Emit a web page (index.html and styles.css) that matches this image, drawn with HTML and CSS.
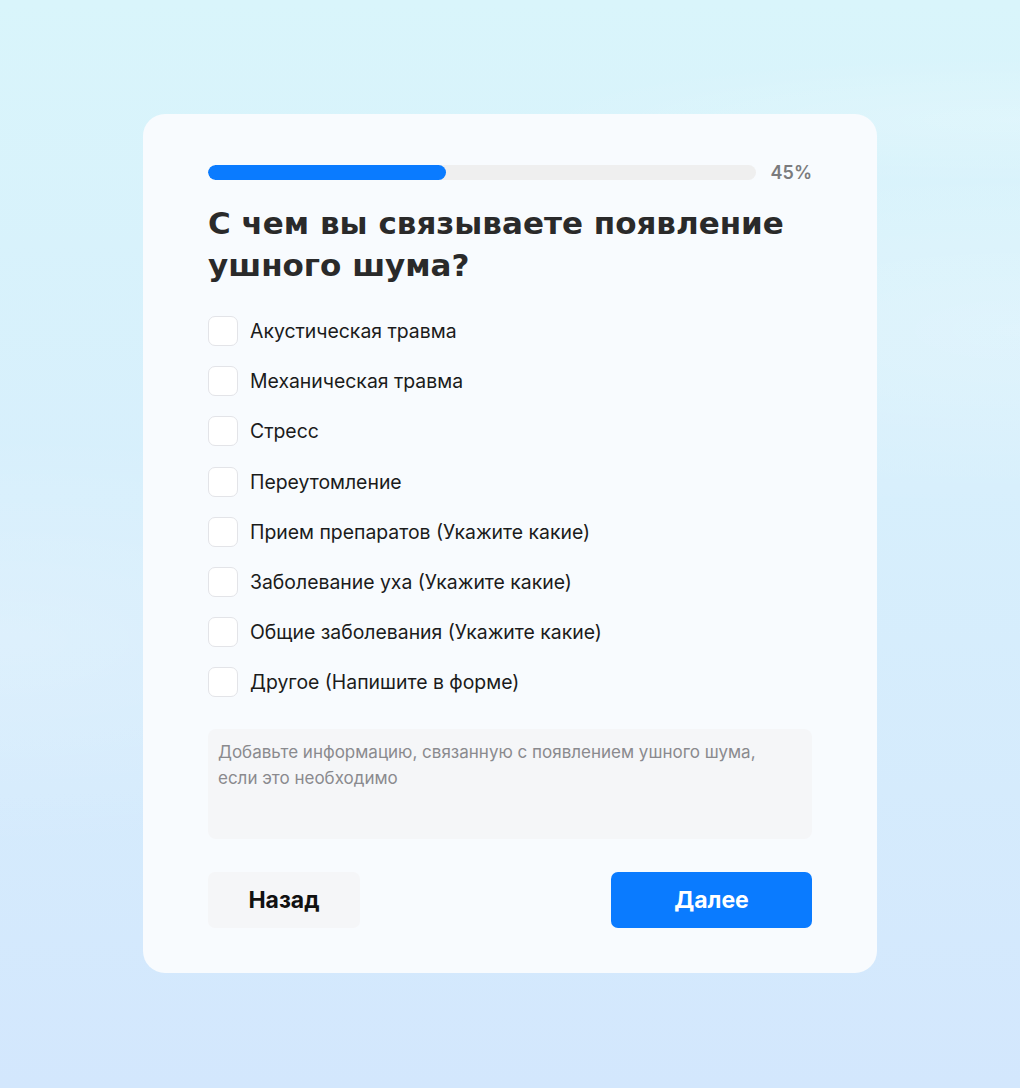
FILE: index.html
```html
<!DOCTYPE html>
<html lang="ru">
<head>
    <meta charset="UTF-8">
    <meta name="viewport" content="width=device-width, initial-scale=1.0">
    <title>Опрос — ушной шум</title>
    <link rel="stylesheet" href="styles.css">
</head>
<body>

<div class="page">
    <div class="quiz-card">
        <!-- Прогресс прохождения опроса -->
        <div class="progress">
            <div class="progress-track">
                <div class="progress-fill" style="width: 43.5%;"></div>
            </div>
            <span class="progress-value">45%</span>
        </div>

        <h2 class="question">С чем вы связываете появление ушного шума?</h2>

        <div class="options">
            <label class="option"><input type="checkbox"><span class="box"></span>Акустическая травма</label>
            <label class="option"><input type="checkbox"><span class="box"></span>Механическая травма</label>
            <label class="option"><input type="checkbox"><span class="box"></span>Стресс</label>
            <label class="option"><input type="checkbox"><span class="box"></span>Переутомление</label>
            <label class="option"><input type="checkbox"><span class="box"></span>Прием препаратов (Укажите какие)</label>
            <label class="option"><input type="checkbox"><span class="box"></span>Заболевание уха (Укажите какие)</label>
            <label class="option"><input type="checkbox"><span class="box"></span>Общие заболевания (Укажите какие)</label>
            <label class="option"><input type="checkbox"><span class="box"></span>Другое (Напишите в форме)</label>
        </div>

        <textarea class="comment" placeholder="Добавьте информацию, связанную с появлением ушного шума, если это необходимо"></textarea>

        <div class="actions">
            <button class="btn back-btn">Назад</button>
            <button class="btn next-btn">Далее</button>
        </div>
    </div>
</div>

</body>
</html>
```

FILE: styles.css
```css
/* General styles */
html, body {
    height: 100%;
}

body {
    margin: 0;
    font-family: Inter, "Noto Sans", sans-serif;
    background:
        radial-gradient(ellipse 700px 90px at 100% 120px, rgba(255, 255, 255, 0.18), transparent 70%),
        radial-gradient(ellipse 900px 260px at 100% 330px, rgba(255, 255, 255, 0.2), transparent 70%),
        radial-gradient(ellipse 800px 300px at 0% 640px, rgba(255, 255, 255, 0.18), transparent 70%),
        linear-gradient(180deg, #d9f5fb 0%, #d7effc 45%, #d3e7fd 100%);
}

.page {
    min-height: 100%;
    padding-top: 114px;
    box-sizing: border-box;
}

.quiz-card {
    width: 734px;
    margin: 0 auto 0 143px;
    padding: 48px 65px 45px;
    box-sizing: border-box;
    background-color: #f8fbfe;
    border-radius: 22px;
}

/* Progress bar */
.progress {
    display: flex;
    align-items: center;
    gap: 15px;
}

.progress-track {
    flex: 1;
    height: 15px;
    background-color: #efefef;
    border-radius: 8px;
    overflow: hidden;
}

.progress-fill {
    height: 100%;
    background-color: #0a7bff;
    border-radius: 8px;
}

.progress-value {
    font-size: 18px;
    font-weight: 600;
    color: #7b7b7d;
}

/* Question */
.question {
    margin: 19px 0 30px;
    font-family: "DejaVu Sans", sans-serif;
    font-size: 31px;
    font-weight: 700;
    line-height: 42px;
    color: #2a2a2a;
}

/* Options */
.options {
    display: flex;
    flex-direction: column;
    gap: 20.2px;
}

.option {
    display: flex;
    align-items: center;
    gap: 12px;
    height: 30px;
    font-size: 19.4px;
    color: #1b1b1b;
    cursor: pointer;
}

.option input {
    display: none;
}

.option .box {
    width: 28px;
    height: 28px;
    border: 1px solid #e3e4e8;
    border-radius: 7px;
    background-color: #fff;
}

.option input:checked + .box {
    background-color: #0a7bff;
    border-color: #0a7bff;
}

.comment {
    display: block;
    width: 100%;
    height: 110px;
    margin-top: 32px;
    padding: 10px 40px 10px 10px;
    box-sizing: border-box;
    border: none;
    border-radius: 8px;
    background-color: #f5f6f8;
    font-family: Inter, "Noto Sans", sans-serif;
    font-size: 17px;
    line-height: 26px;
    color: #333;
    resize: none;
    outline: none;
}

.comment::placeholder {
    color: #8a8a8e;
}

/* Buttons */
.actions {
    display: flex;
    justify-content: space-between;
    margin-top: 33px;
}

.btn {
    height: 56px;
    border: none;
    border-radius: 7px;
    font-family: Inter, "Noto Sans", sans-serif;
    font-size: 23px;
    font-weight: 700;
    cursor: pointer;
}

.back-btn {
    width: 152px;
    background-color: #f5f6f8;
    color: #111;
}

.next-btn {
    width: 201px;
    background-color: #0a7bff;
    color: #fff;
}

.next-btn:hover {
    background-color: #006fe8;
}
```
